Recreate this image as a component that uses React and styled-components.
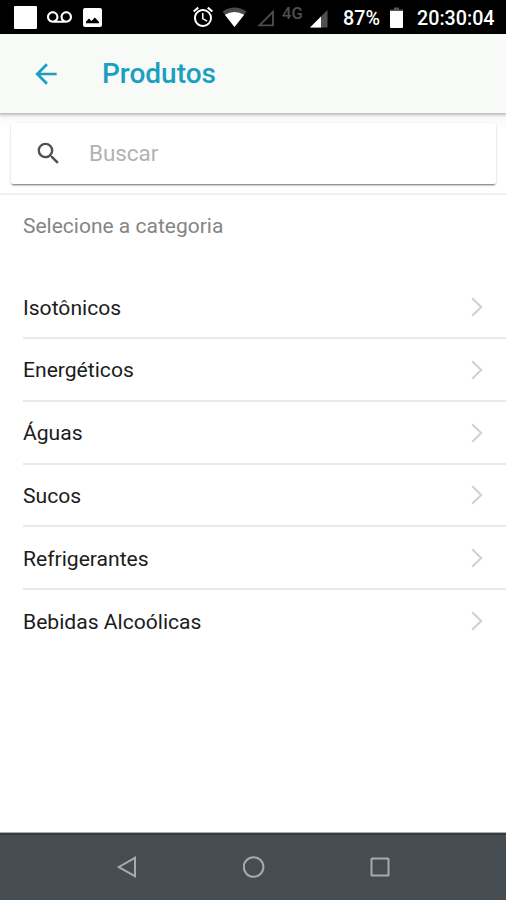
// <========== IMPORTS ==========>

import React from "react"
import styled, { createGlobalStyle } from "styled-components"
import { MdArrowBack, MdSearch, MdVoicemail, MdAlarm } from "react-icons/md"

// <========== COMPONENT ==========>

const categories = [
  "Isotônicos",
  "Energéticos",
  "Águas",
  "Sucos",
  "Refrigerantes",
  "Bebidas Alcoólicas",
]

function PictureIcon() {
  return (
    <svg width="19" height="19" viewBox="0 0 19 19">
      <rect width="19" height="19" rx="2" fill="#fff" />
      <path d="M3 15.3 V13.6 L6 10.6 L8.5 13 L11.8 9.6 L16 14 V15.3 Z" fill="#000" />
    </svg>
  )
}

function WifiIcon() {
  return (
    <svg width="25" height="20" viewBox="0 0 25 20">
      <path d="M12.5 20 L0.5 4.6 Q12.5 -3.8 24.5 4.6 Z" fill="#4a4a4a" />
      <path d="M12.5 20 L2.8 7.8 Q12.5 2.2 22.2 7.8 Z" fill="#fff" />
    </svg>
  )
}

function EmptySignalIcon() {
  return (
    <svg width="18" height="18" viewBox="0 0 18 18">
      <path d="M2.4 16.4 L16 2.8 V16.4 Z" fill="none" stroke="#4c4c4c" strokeWidth="1.9" />
    </svg>
  )
}

function SignalIcon() {
  return (
    <svg width="18" height="18" viewBox="0 0 18 18">
      <path d="M0 17.5 L17.5 0 V17.5 Z" fill="#505050" />
      <path d="M0 17.5 L11 6.5 V17.5 Z" fill="#fff" />
    </svg>
  )
}

function BatteryIcon() {
  return (
    <svg width="13" height="21" viewBox="0 0 13 21">
      <path d="M4 0.5 H9 V2.5 H13 V4.5 H0 V2.5 H4 Z" fill="#555" />
      <path d="M0 4 H13 V20 Q13 21 12 21 H1 Q0 21 0 20 Z" fill="#fff" />
    </svg>
  )
}

function Chevron() {
  return (
    <svg width="12" height="20" viewBox="0 0 12 20">
      <path d="M1.2 1.2 L10.2 10 L1.2 18.8" fill="none" stroke="#d2d2d2" strokeWidth="2.2" />
    </svg>
  )
}

function App() {
  return (
    <Screen>
      <GlobalStyle />
      <StatusBar>
        <Notification />
        <Slot $gap="10px"><MdVoicemail size={25} /></Slot>
        <Slot $gap="11px"><PictureIcon /></Slot>
        <Slot $gap="auto"><MdAlarm size={24} /></Slot>
        <Slot $gap="7px"><WifiIcon /></Slot>
        <Slot $gap="10px" $drop="2px"><EmptySignalIcon /></Slot>
        <Network>4G</Network>
        <Slot $gap="6px" $drop="3px"><SignalIcon /></Slot>
        <Percent>87%</Percent>
        <Slot $gap="10px" $drop="1px"><BatteryIcon /></Slot>
        <Clock>20:30:04</Clock>
      </StatusBar>
      <Header>
        <MdArrowBack size={32} />
        <Title>Produtos</Title>
      </Header>
      <SearchArea>
        <SearchBox>
          <MdSearch size={29} />
          <SearchInput placeholder="Buscar" />
        </SearchBox>
      </SearchArea>
      <Content>
        <Subtitle>Selecione a categoria</Subtitle>
        <List>
          {categories.map((name) => (
            <Item key={name}>
              <Label>{name}</Label>
              <Chevron />
            </Item>
          ))}
        </List>
      </Content>
      <NavBar>
        <svg width="20" height="22" viewBox="0 0 20 22">
          <path d="M1.8 11 L18 1.8 V20.2 Z" />
        </svg>
        <svg width="22" height="22" viewBox="0 0 22 22">
          <circle cx="10.6" cy="11" r="9.8" />
        </svg>
        <svg width="20" height="20" viewBox="0 0 20 20">
          <rect x="1.5" y="1.5" width="17" height="17" rx="0.6" />
        </svg>
      </NavBar>
    </Screen>
  )
}

export default App

// <========== STYLES ==========>

const GlobalStyle = createGlobalStyle`
  * {
    box-sizing: border-box;
  }

  body {
    margin: 0;
    background: #fff;
    font-family: Roboto, sans-serif;
  }

  svg {
    display: block;
    flex-shrink: 0;
  }
`

const Screen = styled.div`
  display: flex;
  flex-direction: column;
  width: 100%;
  height: 900px;
  overflow: hidden;
`

const StatusBar = styled.div`
  display: flex;
  align-items: center;
  flex-shrink: 0;
  height: 34px;
  padding: 0 11px 0 14px;
  background: #000;
  color: #fff;
`

const Notification = styled.div`
  width: 23px;
  height: 23px;
  border-radius: 1px;
  background: #fff;
`

const Slot = styled.div`
  margin-left: ${({ $gap }) => $gap};
  padding-top: ${({ $drop }) => $drop || 0};
`

const Network = styled.span`
  margin: 0 0 7px 7px;
  width: 22px;
  font-size: 16.5px;
  font-weight: 500;
  line-height: 16px;
  color: #505050;
`

const Percent = styled.span`
  margin-left: 15px;
  width: 37px;
  font-size: 19.7px;
  font-weight: 500;
  padding-top: 2px;
`

const Clock = styled.span`
  margin-left: 14px;
  width: 78px;
  font-size: 19.7px;
  font-weight: 500;
  padding-top: 2px;
  white-space: nowrap;
`

const Header = styled.header`
  display: flex;
  align-items: center;
  flex-shrink: 0;
  height: 79px;
  padding: 0 30px;
  background: #f7faf7;
  color: #1a9fc0;
  box-shadow: 0 1px 3px 1px rgba(0, 0, 0, 0.25);
  z-index: 1;
`

const Title = styled.h1`
  margin: 0 0 0 40px;
  font-size: 28px;
  font-weight: 500;
`

const SearchArea = styled.div`
  flex-shrink: 0;
  height: 82px;
  padding: 10px 10px 9px 11px;
  background: linear-gradient(#f8f8f8, #fff 16px);
  border-bottom: 2px solid #efefef;
`

const SearchBox = styled.div`
  display: flex;
  align-items: center;
  height: 61px;
  padding-left: 23px;
  border-radius: 2px;
  background: #fff;
  color: #505050;
  box-shadow: 0 2px 2px -1px rgba(0, 0, 0, 0.5), 0 1px 3px rgba(0, 0, 0, 0.13);
`

const SearchInput = styled.input`
  flex: 1;
  min-width: 0;
  margin-left: 26px;
  padding: 0 0 2px;
  border: 0;
  outline: 0;
  background: none;
  font-family: Roboto, sans-serif;
  font-size: 22.4px;

  &::placeholder {
    color: #b2b2b2;
    opacity: 1;
  }
`

const Content = styled.main`
  flex: 1;
  padding-left: 23px;
`

const Subtitle = styled.p`
  margin: 0;
  height: 81.2px;
  padding-top: 18px;
  font-size: 21px;
  line-height: 26px;
  color: #858585;
`

const List = styled.ul`
  margin: 0;
  padding: 0;
  list-style: none;
`

const Item = styled.li`
  display: flex;
  align-items: center;
  justify-content: space-between;
  height: 62.8px;
  padding: 1px 23px 0 0;
  border-bottom: 2px solid #e9e9e9;

  &:last-child {
    border-bottom-color: transparent;
  }
`

const Label = styled.span`
  font-size: 21.1px;
  color: #1c1c1c;
`

const NavBar = styled.nav`
  display: flex;
  align-items: center;
  justify-content: space-between;
  flex-shrink: 0;
  height: 68px;
  padding: 0 116px 0 117px;
  background: #454d53;
  border-top: 1px solid #a9adaf;
  box-shadow: inset 0 2px 0 #343a3e;

  svg {
    fill: none;
    stroke: #a4abaf;
    stroke-width: 2;
  }
`
